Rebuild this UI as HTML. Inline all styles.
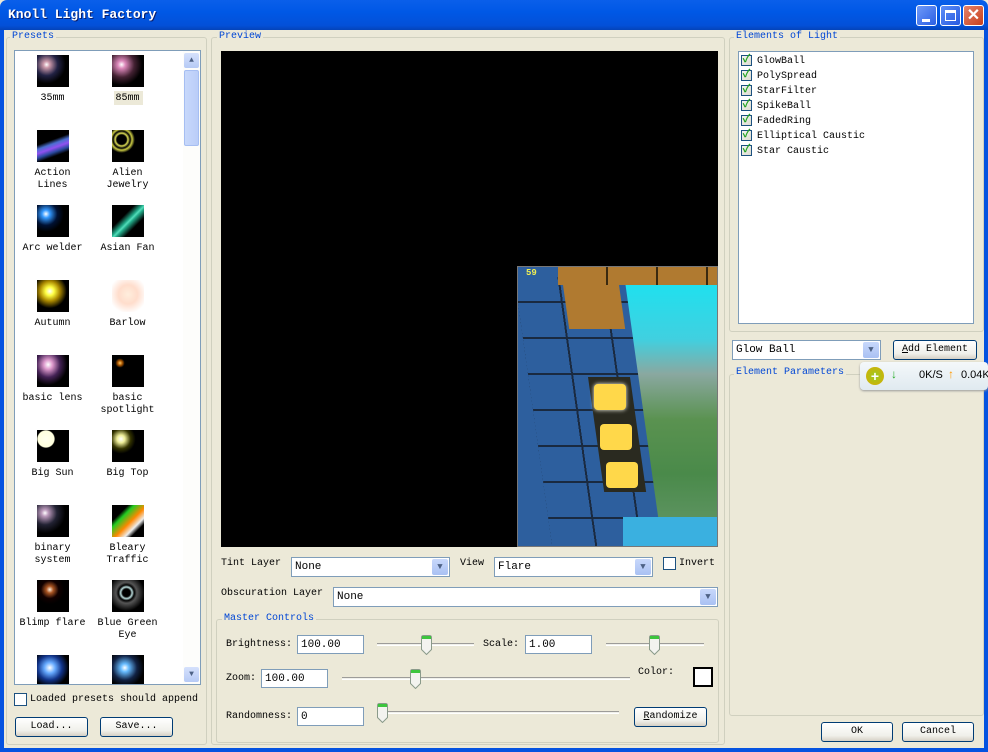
<!DOCTYPE html>
<html><head><meta charset="utf-8">
<style>
*{margin:0;padding:0;box-sizing:border-box}
body{width:988px;height:752px;overflow:hidden;background:#ECE9D8;font-family:"Liberation Mono","Noto Sans CJK SC",monospace;font-size:10px;color:#000;position:relative}
.a{position:absolute}
.title{left:0;top:0;width:988px;height:30px;background:linear-gradient(#0A5FEA,#0058E6 40%,#0350D8 85%,#0443B8);border-radius:7px 7px 0 0}
.title span{position:absolute;left:8px;top:7px;color:#fff;font-weight:bold;font-size:13px;text-shadow:1px 1px 0 #0a1f6e}
.wb{background:#0553E0}
.tb{width:21px;height:21px;top:5px;border:1px solid #fff;border-radius:3px;background:linear-gradient(135deg,#5d8ef7,#2659e0)}
.grp{border:1px solid #D0D0BF;border-radius:3px}
.gl{color:#0046D5;background:#ECE9D8;padding:0 2px}
.box{background:#fff;border:1px solid #7F9DB9}
.ic{width:32px;height:32px;background:#000}
.lb{width:75px;text-align:center;line-height:12px}
.cb{width:13px;height:13px;border:1px solid #1C5180;background:#fff}
.ck{width:11px;height:11px;background:linear-gradient(135deg,#f3f3ef,#dcdcd0);border:1px solid #1C5180;color:#21A121;font-size:11px;line-height:9px;text-align:center;font-weight:bold}
.btn{border:1px solid #003C74;border-radius:3px;background:linear-gradient(#fff,#F0F0EA 70%,#D6D0C5);text-align:center;line-height:17px}
.dd{width:16px;height:16px;border-radius:2px;background:linear-gradient(#C8D8FB,#A9C1F3);color:#4D6185;font-size:9px;text-align:center;line-height:16px}
.tx{background:#fff;border:1px solid #7F9DB9;padding-left:3px;line-height:18px;font-size:11px}
.trk{height:3px;border-top:1px solid #9D9C99;border-bottom:1px solid #fff;background:#F0F0EA}
.th{width:11px;height:20px}
</style></head><body>
<div class="a title"><span>Knoll Light Factory</span></div>
<div class="a tb" style="left:916px;background:linear-gradient(135deg,#6f9af8,#2b5fe4)"><div class="a" style="left:5px;top:13px;width:8px;height:3px;background:#fff"></div></div>
<div class="a tb" style="left:940px"><div class="a" style="left:4px;top:4px;width:11px;height:11px;border:1px solid #fff;border-top-width:3px"></div></div>
<div class="a tb" style="left:963px;background:linear-gradient(135deg,#e4826a,#c8401c);color:#fff;font:bold 16px 'Liberation Sans',sans-serif;text-align:center;line-height:19px">✕</div>
<div class="a wb" style="left:0;top:30px;width:4px;height:722px"></div>
<div class="a wb" style="left:984px;top:30px;width:4px;height:722px"></div>
<div class="a wb" style="left:0;top:748px;width:988px;height:4px"></div>

<!-- Presets -->
<div class="a grp" style="left:6px;top:37px;width:201px;height:708px"></div>
<div class="a gl" style="left:10px;top:31px">Presets</div>
<div class="a box" style="left:14px;top:50px;width:187px;height:635px;overflow:hidden">
 <div class="a" style="right:0;top:0;width:17px;height:633px;background:#FDFDFB"></div>
 <div class="a" style="right:1px;top:2px;width:15px;height:15px;border-radius:2px;background:linear-gradient(#D5E1FC,#B6CAF5);color:#4D6185;font-size:8px;text-align:center;line-height:15px">▲</div>
 <div class="a" style="right:1px;top:19px;width:15px;height:76px;border-radius:2px;border:1px solid #A6BEF2;background:linear-gradient(90deg,#C8D8FB,#BACDF8)"></div>
 <div class="a" style="right:1px;bottom:2px;width:15px;height:15px;border-radius:2px;background:linear-gradient(#D5E1FC,#B6CAF5);color:#4D6185;font-size:8px;text-align:center;line-height:15px">▼</div>
</div>
<div class="a" style="left:14px;top:50px;width:168px;height:634px;overflow:hidden">
 <div class="a ic" style="left:23px;top:5px;background:radial-gradient(circle at 30% 30%,#fff 0,#c9a 10%,#224 35%,#000 60%)"></div>
 <div class="a lb" style="left:1px;top:43px">35mm</div>
 <div class="a ic" style="left:98px;top:5px;background:radial-gradient(circle at 30% 30%,#fff 0,#d8b 12%,#423 40%,#000 65%)"></div>
 <div class="a" style="left:100px;top:41px;width:29px;height:14px;background:#ECE9D8"></div>
 <div class="a lb" style="left:76px;top:43px">85mm</div>
 <div class="a ic" style="left:23px;top:80px;background:linear-gradient(160deg,#000 35%,#4a6fd0 45%,#9050f0 55%,#2a4aa0 65%,#000 75%)"></div>
 <div class="a lb" style="left:1px;top:118px">Action<br>Lines</div>
 <div class="a ic" style="left:98px;top:80px;background:radial-gradient(circle at 30% 30%,#000 0,#000 15%,#dd5 20%,#000 27%,#cc4 33%,#000 42%)"></div>
 <div class="a lb" style="left:76px;top:118px">Alien<br>Jewelry</div>
 <div class="a ic" style="left:23px;top:155px;background:radial-gradient(circle at 28% 28%,#fff 0,#39f 12%,#013 35%,#000 55%)"></div>
 <div class="a lb" style="left:1px;top:193px">Arc welder</div>
 <div class="a ic" style="left:98px;top:155px;background:linear-gradient(135deg,#000 35%,#2a8 48%,#5db 52%,#2a8 56%,#000 70%)"></div>
 <div class="a lb" style="left:76px;top:193px">Asian Fan</div>
 <div class="a ic" style="left:23px;top:230px;background:radial-gradient(circle at 40% 35%,#fff 0,#ff4 15%,#a80 35%,#000 60%)"></div>
 <div class="a lb" style="left:1px;top:268px">Autumn</div>
 <div class="a ic" style="left:98px;top:230px;background:radial-gradient(circle at 50% 45%,#fed 0,#fdc 40%,#fff 80%)"></div>
 <div class="a lb" style="left:76px;top:268px">Barlow</div>
 <div class="a ic" style="left:23px;top:305px;background:radial-gradient(ellipse at 35% 30%,#fff 0,#d9c 15%,#425 40%,#000 65%)"></div>
 <div class="a lb" style="left:1px;top:343px">basic lens</div>
 <div class="a ic" style="left:98px;top:305px;background:radial-gradient(circle at 25% 25%,#fc6 0,#a50 7%,#000 14%)"></div>
 <div class="a lb" style="left:76px;top:343px">basic<br>spotlight</div>
 <div class="a ic" style="left:23px;top:380px;background:radial-gradient(circle at 28% 28%,#ffe 0,#ffd 25%,#000 28%)"></div>
 <div class="a lb" style="left:1px;top:418px">Big Sun</div>
 <div class="a ic" style="left:98px;top:380px;background:radial-gradient(circle at 28% 28%,#fff 0,#ee9 12%,#330 30%,#000 45%)"></div>
 <div class="a lb" style="left:76px;top:418px">Big Top</div>
 <div class="a ic" style="left:23px;top:455px;background:radial-gradient(circle at 25% 25%,#fff 0,#b9b 10%,#223 35%,#000 60%)"></div>
 <div class="a lb" style="left:1px;top:493px">binary<br>system</div>
 <div class="a ic" style="left:98px;top:455px;background:linear-gradient(135deg,#000 25%,#2c2 35%,#f80 55%,#eee 70%,#000 80%)"></div>
 <div class="a lb" style="left:76px;top:493px">Bleary<br>Traffic</div>
 <div class="a ic" style="left:23px;top:530px;background:radial-gradient(circle at 40% 30%,#fed 0,#a52 12%,#100 30%,#000 50%)"></div>
 <div class="a lb" style="left:1px;top:568px">Blimp flare</div>
 <div class="a ic" style="left:98px;top:530px;background:radial-gradient(circle at 45% 40%,#000 0,#000 15%,#bdd 22%,#000 30%,#555 40%,#000 70%)"></div>
 <div class="a lb" style="left:76px;top:568px">Blue Green<br>Eye</div>
 <div class="a ic" style="left:23px;top:605px;background:radial-gradient(circle at 40% 40%,#fff 0,#6af 20%,#138 45%,#000 70%)"></div>
 <div class="a ic" style="left:98px;top:605px;background:radial-gradient(circle at 40% 40%,#fff 0,#6bf 15%,#124 45%,#000 70%)"></div>
</div>
<div class="a cb" style="left:14px;top:693px"></div>
<div class="a" style="left:30px;top:694px">Loaded presets should append</div>
<div class="a btn" style="left:15px;top:717px;width:73px;height:20px">Load...</div>
<div class="a btn" style="left:100px;top:717px;width:73px;height:20px">Save...</div>

<!-- Preview -->
<div class="a grp" style="left:211px;top:37px;width:514px;height:708px"></div>
<div class="a gl" style="left:217px;top:31px">Preview</div>
<div class="a" style="left:221px;top:51px;width:497px;height:496px;background:#000"></div>
<div class="a" style="left:517px;top:266px;width:201px;height:281px;overflow:hidden;background:#2d5f9e;border:1px solid #777">
 <div class="a" style="left:105px;top:18px;width:110px;height:270px;background:linear-gradient(#20e0ee,#40d0e0 20%,#8aa8a0 33%,#5a9250 50%,#4a8a4a 70%,#6a9a70)"></div>
 <div class="a" style="left:-5px;top:0;width:110px;height:290px;background:repeating-linear-gradient(180deg,#2d5f9e 0 34px,#1a2a40 34px 36px);transform:skewX(8deg);transform-origin:0 0"></div>
 <div class="a" style="left:-5px;top:0;width:110px;height:290px;background:repeating-linear-gradient(90deg,transparent 0 43px,#1a2a40 43px 45px);transform:skewX(8deg);transform-origin:0 0"></div>
 <div class="a" style="left:40px;top:0;width:165px;height:18px;background:repeating-linear-gradient(90deg,#b07a30 0 48px,#3a2a10 48px 50px)"></div>
 <div class="a" style="left:45px;top:18px;width:56px;height:44px;background:#b07a30;transform:skewX(8deg);transform-origin:0 0"></div>
 <div class="a" style="left:70px;top:110px;width:42px;height:115px;background:#2a2a20;transform:skewX(8deg);transform-origin:0 0"></div>
 <div class="a" style="left:76px;top:117px;width:32px;height:26px;background:#ffd84a;border-radius:4px;box-shadow:0 0 4px #ffe"></div>
 <div class="a" style="left:82px;top:157px;width:32px;height:26px;background:#ffd84a;border-radius:4px"></div>
 <div class="a" style="left:88px;top:195px;width:32px;height:26px;background:#ffd84a;border-radius:4px"></div>
 <div class="a" style="left:105px;top:250px;width:100px;height:31px;background:#3ab0e0"></div>
 <div class="a" style="left:0;top:0;width:40px;height:10px;background:#2d5f9e"></div>
 <div class="a" style="left:8px;top:1px;color:#ee5;font-size:9px;font-weight:bold">59</div>
</div>
<div class="a" style="left:221px;top:558px">Tint Layer</div>
<div class="a tx" style="left:291px;top:557px;width:159px;height:20px">None<div class="a dd" style="right:1px;top:1px">▼</div></div>
<div class="a" style="left:460px;top:558px">View</div>
<div class="a tx" style="left:494px;top:557px;width:159px;height:20px">Flare<div class="a dd" style="right:1px;top:1px">▼</div></div>
<div class="a cb" style="left:663px;top:557px"></div>
<div class="a" style="left:679px;top:558px">Invert</div>
<div class="a" style="left:221px;top:588px">Obscuration Layer</div>
<div class="a tx" style="left:333px;top:587px;width:385px;height:20px">None<div class="a dd" style="right:1px;top:1px">▼</div></div>
<div class="a grp" style="left:216px;top:619px;width:503px;height:124px"></div>
<div class="a gl" style="left:222px;top:613px">Master Controls</div>
<div class="a" style="left:226px;top:639px">Brightness:</div>
<div class="a tx" style="left:297px;top:635px;width:67px;height:19px">100.00</div>
<div class="a trk" style="left:377px;top:643px;width:97px"></div>
<div class="a th" style="left:421px;top:635px"><svg width="11" height="20"><path d="M0.5 2.5Q0.5 0.5 2.5 0.5H8.5Q10.5 0.5 10.5 2.5V14.5L5.5 19.5L0.5 14.5Z" fill="#F3F3EF" stroke="#8a9a8a"/><rect x="1" y="1" width="9" height="3" fill="#3DC53D"/></svg></div>
<div class="a" style="left:483px;top:639px">Scale:</div>
<div class="a tx" style="left:525px;top:635px;width:67px;height:19px">1.00</div>
<div class="a trk" style="left:606px;top:643px;width:98px"></div>
<div class="a th" style="left:649px;top:635px"><svg width="11" height="20"><path d="M0.5 2.5Q0.5 0.5 2.5 0.5H8.5Q10.5 0.5 10.5 2.5V14.5L5.5 19.5L0.5 14.5Z" fill="#F3F3EF" stroke="#8a9a8a"/><rect x="1" y="1" width="9" height="3" fill="#3DC53D"/></svg></div>
<div class="a" style="left:226px;top:673px">Zoom:</div>
<div class="a tx" style="left:261px;top:669px;width:67px;height:19px">100.00</div>
<div class="a trk" style="left:342px;top:677px;width:288px"></div>
<div class="a th" style="left:410px;top:669px"><svg width="11" height="20"><path d="M0.5 2.5Q0.5 0.5 2.5 0.5H8.5Q10.5 0.5 10.5 2.5V14.5L5.5 19.5L0.5 14.5Z" fill="#F3F3EF" stroke="#8a9a8a"/><rect x="1" y="1" width="9" height="3" fill="#3DC53D"/></svg></div>
<div class="a" style="left:638px;top:667px">Color:</div>
<div class="a" style="left:693px;top:667px;width:20px;height:20px;border:2px solid #000;background:#fff"></div>
<div class="a" style="left:226px;top:711px">Randomness:</div>
<div class="a tx" style="left:297px;top:707px;width:67px;height:19px">0</div>
<div class="a trk" style="left:377px;top:711px;width:242px"></div>
<div class="a th" style="left:377px;top:703px"><svg width="11" height="20"><path d="M0.5 2.5Q0.5 0.5 2.5 0.5H8.5Q10.5 0.5 10.5 2.5V14.5L5.5 19.5L0.5 14.5Z" fill="#F3F3EF" stroke="#8a9a8a"/><rect x="1" y="1" width="9" height="3" fill="#3DC53D"/></svg></div>
<div class="a btn" style="left:634px;top:707px;width:73px;height:20px"><u>R</u>andomize</div>

<!-- Elements -->
<div class="a grp" style="left:729px;top:37px;width:255px;height:295px"></div>
<div class="a gl" style="left:734px;top:31px">Elements of Light</div>
<div class="a box" style="left:738px;top:51px;width:236px;height:273px"></div>
<div class="a" style="left:741px;top:54px;line-height:15px">
 <div><span class="ck a" style="left:0;top:1px">✓</span><span style="margin-left:16px">GlowBall</span></div>
 <div><span class="ck a" style="left:0;top:16px">✓</span><span style="margin-left:16px">PolySpread</span></div>
 <div><span class="ck a" style="left:0;top:31px">✓</span><span style="margin-left:16px">StarFilter</span></div>
 <div><span class="ck a" style="left:0;top:46px">✓</span><span style="margin-left:16px">SpikeBall</span></div>
 <div><span class="ck a" style="left:0;top:61px">✓</span><span style="margin-left:16px">FadedRing</span></div>
 <div><span class="ck a" style="left:0;top:76px">✓</span><span style="margin-left:16px">Elliptical&nbsp;Caustic</span></div>
 <div><span class="ck a" style="left:0;top:91px">✓</span><span style="margin-left:16px">Star&nbsp;Caustic</span></div>
</div>
<div class="a tx" style="left:732px;top:340px;width:149px;height:20px">Glow Ball<div class="a dd" style="right:1px;top:1px">▼</div></div>
<div class="a btn" style="left:893px;top:340px;width:84px;height:20px"><u>A</u>dd Element</div>
<div class="a grp" style="left:729px;top:374px;width:255px;height:342px"></div>
<div class="a gl" style="left:734px;top:367px">Element Parameters</div>
<div class="a" style="left:860px;top:362px;width:128px;height:28px;background:linear-gradient(#F4F8FA,#E0EAF0);border-radius:4px;box-shadow:0 1px 2px #999"></div>
<div class="a" style="left:866px;top:367px;width:18px;height:18px;border-radius:50%;background:radial-gradient(#9c2,#da0);color:#fff;font:bold 14px 'Liberation Sans',sans-serif;text-align:center;line-height:18px">+</div>
<div class="a" style="left:891px;top:367px;color:#2a2;font:bold 12px 'Liberation Sans',sans-serif">↓</div>
<div class="a" style="left:919px;top:369px;font:11px 'Liberation Sans',sans-serif">0K/S</div>
<div class="a" style="left:948px;top:367px;color:#f90;font:bold 12px 'Liberation Sans',sans-serif">↑</div>
<div class="a" style="left:961px;top:369px;font:11px 'Liberation Sans',sans-serif;white-space:nowrap">0.04K</div>
<div class="a btn" style="left:821px;top:722px;width:72px;height:20px">OK</div>
<div class="a btn" style="left:902px;top:722px;width:72px;height:20px">Cancel</div>
</body></html>
